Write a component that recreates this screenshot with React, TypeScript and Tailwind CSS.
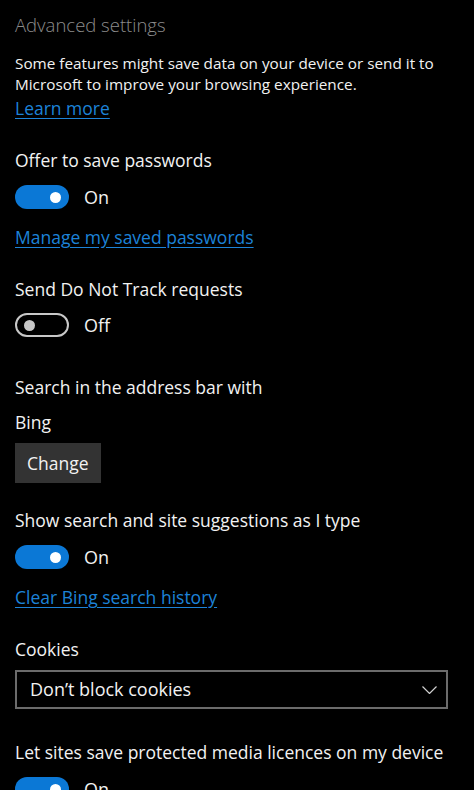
import React from 'react';

const Toggle = ({ on }: { on: boolean }) => (
  <div className="flex items-center h-6">
    {on ? (
      <div className="w-[54px] h-6 rounded-full bg-[#0b78d6] flex items-center justify-end pr-[8px]">
        <div className="w-[11px] h-[11px] rounded-full bg-white" />
      </div>
    ) : (
      <div className="w-[54px] h-6 rounded-full border-2 border-[#c8c8c8] flex items-center pl-[7px]">
        <div className="w-[11px] h-[11px] rounded-full bg-[#c8c8c8]" />
      </div>
    )}
    <span className="ml-[15px] text-[18px] text-[#f2f2f2]">{on ? 'On' : 'Off'}</span>
  </div>
);

const Label = ({ children, className = '' }: { children: React.ReactNode; className?: string }) => (
  <div className={`text-[17.5px] leading-6 text-[#f2f2f2] ${className}`}>{children}</div>
);

const Link = ({ children, className = '' }: { children: React.ReactNode; className?: string }) => (
  <div className={`text-[17.5px] leading-6 text-[#1d83d8] underline underline-offset-[3px] ${className}`}>{children}</div>
);

export default function App() {
  return (
    <div className="w-[474px] h-[790px] overflow-hidden bg-black font-['Open_Sans',sans-serif] px-[15px]">
      <div className="pt-[13px] text-[18.5px] font-light leading-6 text-[#8c8c8c]">Advanced settings</div>
      <p className="mt-[16px] text-[15.3px] leading-[21px] text-[#f2f2f2]">
        Some features might save data on your device or send it to Microsoft to improve your browsing experience.
      </p>
      <Link className="mt-[1px]">Learn more</Link>

      <Label className="mt-[28px]">Offer to save passwords</Label>
      <div className="mt-[13px]">
        <Toggle on />
      </div>
      <Link className="mt-[16px]">Manage my saved passwords</Link>

      <Label className="mt-[28px]">Send Do Not Track requests</Label>
      <div className="mt-[12px]">
        <Toggle on={false} />
      </div>

      <Label className="mt-[38px]">Search in the address bar with</Label>
      <Label className="mt-[11px]">Bing</Label>
      <button className="mt-[9px] h-10 px-[12px] bg-[#333333] text-[17.5px] text-[#f2f2f2]">Change</button>

      <Label className="mt-[25px]">Show search and site suggestions as I type</Label>
      <div className="mt-[13px]">
        <Toggle on />
      </div>
      <Link className="mt-[16px]">Clear Bing search history</Link>

      <Label className="mt-[28px]">Cookies</Label>
      <div className="mt-[9px] w-[433px] h-[39px] border-2 border-[#6b6b6b] flex items-center justify-between pl-[13px] pr-[9px]">
        <span className="text-[18px] text-[#f2f2f2]">Don’t block cookies</span>
        <svg width="15" height="8" viewBox="0 0 15 8" fill="none" stroke="#d0d0d0" strokeWidth="1.2">
          <path d="M0.5 0.5l7 7 7-7" />
        </svg>
      </div>

      <Label className="mt-[31px]">Let sites save protected media licences on my device</Label>
      <div className="mt-[13px]">
        <Toggle on />
      </div>
    </div>
  );
}
